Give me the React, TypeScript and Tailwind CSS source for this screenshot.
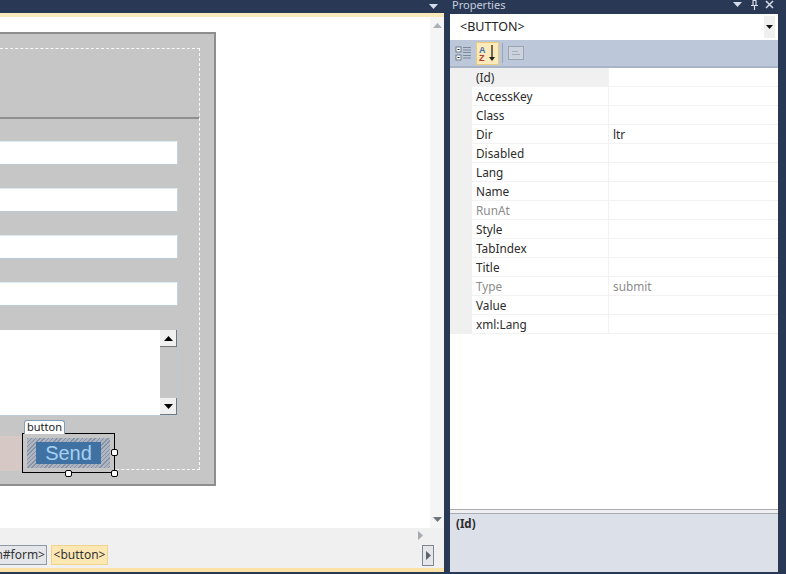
import React from 'react';

const font = { fontFamily: '"Noto Sans", "Open Sans", sans-serif' };

const rows = [
  { name: '(Id)', value: '' },
  { name: 'AccessKey', value: '' },
  { name: 'Class', value: '' },
  { name: 'Dir', value: 'ltr' },
  { name: 'Disabled', value: '' },
  { name: 'Lang', value: '' },
  { name: 'Name', value: '' },
  { name: 'RunAt', value: '', muted: true },
  { name: 'Style', value: '' },
  { name: 'TabIndex', value: '' },
  { name: 'Title', value: '' },
  { name: 'Type', value: 'submit', muted: true },
  { name: 'Value', value: '' },
  { name: 'xml:Lang', value: '' },
];

const Triangle = ({ up = false, className = '' }: { up?: boolean; className?: string }) => (
  <svg width="9" height="5" viewBox="0 0 9 5" className={className} fill="currentColor">
    <path d={up ? 'M0 5 L4.5 0 L9 5 Z' : 'M0 0 L9 0 L4.5 5 Z'} />
  </svg>
);

const Field = ({ mb }: { mb: string }) => (
  <div className={`h-[24px] w-[178px] bg-white border border-[#dcecf4] border-l-0 border-r-[#c5d2da] border-b-[#bccbd6] ${mb}`} />
);

const Handle = ({ className }: { className: string }) => (
  <div className={`absolute w-[7px] h-[7px] rounded-[2px] bg-white border border-black ${className}`} />
);

const Designer = () => (
  <div className="flex-1 bg-white flex min-h-0">
    <div className="flex-1 pt-[15px] min-w-0">
      {/* form panel, cut by the left edge of the view */}
      <div className="w-[216px] h-[454px] bg-[#c6c6c6] border-t-2 border-r-2 border-b-2 border-[#8e8e8e] pt-[14px]">
        <div className="w-[200px] h-[422px] border-t border-r border-b border-dashed border-[#fafafa]">
          <div className="h-[70px] border-b-2 border-[#8f8f8f]" />
          <div className="pt-[22px]">
            <Field mb="mb-[23px]" />
            <Field mb="mb-[23px]" />
            <Field mb="mb-[23px]" />
            <Field mb="mb-[24px]" />
            {/* textarea with its scrollbar */}
            <div className="w-[178px] h-[86px] flex border-r border-b border-[#bccbd6]">
              <div className="w-[160px] bg-white" />
              <div className="flex-1 flex flex-col justify-between">
                <div className="h-[17px] bg-[#f0f0f0] border-r border-b border-[#777] flex items-center justify-center">
                  <Triangle up className="text-black" />
                </div>
                <div className="h-[17px] bg-[#f0f0f0] border-r border-b border-[#777] flex items-center justify-center">
                  <Triangle className="text-black" />
                </div>
              </div>
            </div>
            {/* selected button */}
            <div className="flex items-start mt-[17px]">
              <div className="w-[22px] h-[35px] mt-[3px] bg-[#d6c8c4]" />
              <div className="relative w-[93px] h-[40px] border border-black bg-[#c6c6c6] p-[4px]">
                <div className="absolute left-[1px] top-[-14px] w-[41px] h-[14px] bg-white border border-b-0 border-[#7f9db9] rounded-t-[3px] text-[11px] leading-[11px] text-center text-[#222]" style={font}>
                  button
                </div>
                <div className="w-full h-full bg-[repeating-linear-gradient(135deg,#8794a8_0px,#8794a8_1px,#aeb5c0_1px,#aeb5c0_3px)] px-[9px] py-[4px]">
                  <div className="w-full h-full bg-[#3f72a3] flex items-center justify-center text-[20px] leading-none text-[#a6d0f2] font-['Liberation_Sans',sans-serif]">
                    Send
                  </div>
                </div>
                <Handle className="right-[-4px] top-[15px]" />
                <Handle className="left-[42px] bottom-[-5px]" />
                <Handle className="right-[-4px] bottom-[-5px]" />
              </div>
            </div>
          </div>
        </div>
      </div>
    </div>
    {/* vertical scrollbar */}
    <div className="w-[14px] bg-[#f5f5f5] flex flex-col justify-between items-center py-[6px]">
      <Triangle up className="text-[#aab0b8]" />
      <Triangle className="text-[#6f747c]" />
    </div>
  </div>
);

const LeftPane = () => (
  <div className="w-[444px] flex flex-col">
    <div className="h-[13px] bg-[#293955] flex justify-end items-center pr-[6px]">
      <Triangle className="text-[#d5dce8]" />
    </div>
    <div className="h-[4px] bg-[#fbeab9]" />
    <Designer />
    <div className="h-[40px] bg-[#f0f0f0] flex flex-col">
      <div className="h-[14px] flex justify-end items-center pr-[21px]">
        <svg width="5" height="9" viewBox="0 0 5 9" className="text-[#a5a9b0]" fill="currentColor">
          <path d="M0 0 L5 4.5 L0 9 Z" />
        </svg>
      </div>
      <div className="flex items-start pt-[3px] text-[12px] leading-[18px]" style={font}>
        <div className="w-[47px] h-[20px] overflow-hidden bg-[#e4e6ea] border border-l-0 border-[#8f98a6] text-[#333] flex justify-end pr-[1px]">
          <span className="whitespace-nowrap">n#form&gt;</span>
        </div>
        <div className="ml-[4px] w-[57px] h-[20px] bg-[#fde8b4] border border-[#f0d48e] text-[#333] text-center">
          &lt;button&gt;
        </div>
        <div className="ml-auto mr-[10px] w-[12px] h-[21px] bg-[#e4e6ea] border border-[#7f8793] flex items-center justify-center">
          <svg width="5" height="9" viewBox="0 0 5 9" className="text-[#5c6470]" fill="currentColor">
            <path d="M0 0 L5 4.5 L0 9 Z" />
          </svg>
        </div>
      </div>
    </div>
    <div className="h-[4px] bg-[#fbe3a8]" />
    <div className="h-[2px] bg-[#293955]" />
  </div>
);

const PropertiesPane = () => (
  <div className="w-[328px] flex flex-col">
    <div className="h-[14px] flex items-end justify-between overflow-hidden">
      <span className="text-[11px] leading-[18px] pl-[2px] text-[#c6cfdf]" style={font}>Properties</span>
      <div className="flex items-center h-[14px] mr-[4px] pb-[5px] text-[#d5dce8]">
        <Triangle />
        <svg width="9" height="10" viewBox="0 0 9 10" fill="none" stroke="currentColor" strokeWidth="1.2" className="ml-[8px]">
          <path d="M2.5 0.5 H6.5 M3 0.5 V5 M6 0.5 V5 M1 5.5 H8 M4.5 5.5 V10" />
        </svg>
        <svg width="9" height="9" viewBox="0 0 9 9" fill="none" stroke="currentColor" strokeWidth="1.5" className="ml-[6px]">
          <path d="M1 1 L8 8 M8 1 L1 8" />
        </svg>
      </div>
    </div>
    <div className="h-[26px] bg-white flex items-center pl-[10px] pr-[3px] text-[12.5px] text-[#222]" style={font}>
      <span className="flex-1">&lt;BUTTON&gt;</span>
      <div className="w-[11px] h-[22px] bg-[#f0f0f0] flex items-center justify-center">
        <svg width="7" height="4" viewBox="0 0 7 4" fill="#111"><path d="M0 0 H7 L3.5 4 Z" /></svg>
      </div>
    </div>
    <div className="h-[28px] bg-[#bcc7d9] border-b-2 border-[#a9b4c6] flex items-center pl-[5px]">
      <svg width="18" height="18" viewBox="0 0 18 18">
        <rect x="1" y="3" width="5" height="5" fill="#f4f6f8" stroke="#5a6676" strokeWidth="0.8" />
        <rect x="1" y="11" width="5" height="5" fill="#f4f6f8" stroke="#5a6676" strokeWidth="0.8" />
        <path d="M2.5 5.5 H4.5 M2.5 13.5 H4.5" stroke="#222" />
        <path d="M8 3.5 H16 M8 6 H16 M8 8.5 H16 M8 11.5 H16 M8 14 H16" stroke="#7d8898" />
      </svg>
      <div className="ml-[3px] w-[23px] h-[23px] bg-[#fdeabb] border border-[#e8cb7c] flex items-center justify-center">
        <svg width="19" height="19" viewBox="0 0 19 19">
          <text x="1" y="8.5" fontSize="9" fontWeight="700" fill="#3a6fb0" fontFamily="Liberation Sans">A</text>
          <text x="1" y="17" fontSize="9" fontWeight="700" fill="#b23a3a" fontFamily="Liberation Sans">Z</text>
          <path d="M14 1 V14" stroke="#222" strokeWidth="1.3" />
          <path d="M11 13 H17 L14 17 Z" fill="#222" />
        </svg>
      </div>
      <div className="ml-[3px] w-px h-[20px] bg-[#9aa6b8]" />
      <div className="ml-[5px] w-[16px] h-[14px] bg-[#ccd3df] border border-[#9aa4b3] flex flex-col justify-center gap-[2px] px-[3px]">
        <div className="h-px w-[6px] bg-[#a2abb9]" />
        <div className="h-px bg-[#a2abb9]" />
      </div>
    </div>
    <div className="flex-1 bg-white min-h-0 text-[11.8px]" style={font}>
      {rows.map((row, i) => (
        <div key={row.name} className="h-[19px] flex">
          <div className="w-[22px] bg-[#f0f0f0]" />
          <div className={`w-[137px] pl-[4px] leading-[18px] border-b border-r border-[#f2f2f2] ${row.muted ? 'text-[#8c8c8c]' : 'text-[#2c2c2c]'} ${i === 0 ? 'bg-[#f0f0f0]' : ''}`}>
            {row.name}
          </div>
          <div className={`flex-1 pl-[4px] leading-[18px] border-b border-[#f2f2f2] ${row.muted ? 'text-[#8c8c8c]' : 'text-[#2c2c2c]'}`}>
            {row.value}
          </div>
        </div>
      ))}
    </div>
    <div className="h-[5px] bg-[#f0f0f0] border-y border-[#a9adb3]" />
    <div className="h-[58px] bg-[#dce0e8] pl-[6px] pt-[1px] text-[11.5px] font-bold text-[#2c2c2c]" style={font}>
      (Id)
    </div>
    <div className="h-[2px] bg-[#293955]" />
  </div>
);

export default function App() {
  return (
    <div className="w-[786px] h-[574px] overflow-hidden flex bg-[#293955]">
      <LeftPane />
      <div className="w-[6px]" />
      <PropertiesPane />
    </div>
  );
}
